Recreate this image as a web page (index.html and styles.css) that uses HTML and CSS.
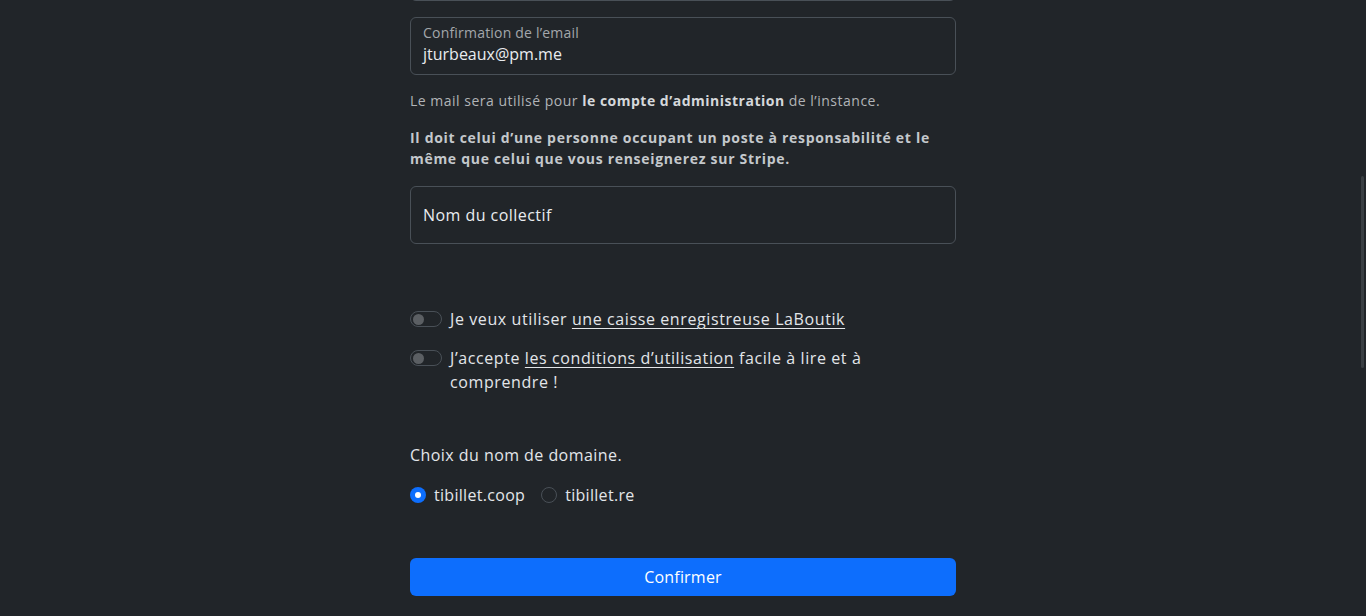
FILE: index.html
```html
<!DOCTYPE html>
<html lang="fr">
<head>
<meta charset="utf-8">
<title>Inscription</title>
<link rel="stylesheet" href="styles.css">
</head>
<body>
<main class="form">
  <div class="field field-prev"></div>

  <div class="field field-floating">
    <span class="float-label">Confirmation de l’email</span>
    <span class="float-value">jturbeaux@pm.me</span>
  </div>

  <p class="help">Le mail sera utilisé pour <strong>le compte d’administration</strong> de l’instance.</p>
  <p class="help help-strong">Il doit celui d’une personne occupant un poste à responsabilité et le même que celui que vous renseignerez sur Stripe.</p>

  <div class="field field-plain">Nom du collectif</div>

  <div class="switches">
    <label class="switch-row">
      <span class="switch"><span class="knob"></span></span>
      <span class="switch-text">Je veux utiliser <a href="#" class="link">une caisse enregistreuse LaBoutik</a></span>
    </label>
    <label class="switch-row">
      <span class="switch"><span class="knob"></span></span>
      <span class="switch-text">J’accepte <a href="#" class="link">les conditions d’utilisation</a> facile à lire et à comprendre !</span>
    </label>
  </div>

  <p class="domain-title">Choix du nom de domaine.</p>
  <div class="radios">
    <label class="radio-item"><span class="radio radio-on"></span>tibillet.coop</label>
    <label class="radio-item"><span class="radio"></span>tibillet.re</label>
  </div>

  <button class="btn-primary" type="button">Confirmer</button>
</main>
<div class="scroll-thumb"></div>
</body>
</html>
```

FILE: styles.css
```css
html, body {
  margin: 0;
  padding: 0;
  background: #212529;
  height: 100%;
  overflow: hidden;
}

body {
  font-family: "Open Sans", "Noto Sans", sans-serif;
  color: #dee2e6;
  font-size: 16px;
  line-height: 24px;
}

.form {
  width: 546px;
  margin: 0 auto;
  display: flex;
  flex-direction: column;
}

.field {
  box-sizing: border-box;
  border: 1px solid #495057;
  border-radius: 6px;
  height: 58px;
}

.field-prev {
  margin-top: -57px;
  margin-bottom: 16px;
}

.field-floating {
  display: flex;
  flex-direction: column;
  padding: 6px 12px 8px;
}

.float-label {
  font-size: 14px;
  line-height: 18px;
  letter-spacing: 0.2px;
  color: #a3a7ab;
}

.float-value {
  font-size: 16px;
  line-height: 24px;
  color: #e9ecef;
}

.help {
  margin: 15px 0 0;
  font-size: 14px;
  line-height: 21px;
  letter-spacing: 0.5px;
  color: #b1b4b7;
}

.help strong {
  color: #d5d8db;
  font-weight: 700;
}

.help-strong {
  margin-top: 16px;
  font-weight: 700;
  letter-spacing: 0.7px;
  color: #c4c8cc;
}

.field-plain {
  margin-top: 17px;
  display: flex;
  align-items: center;
  padding: 0 12px;
  letter-spacing: 0.45px;
  color: #e9ecef;
}

.switches {
  margin-top: 63px;
  display: flex;
  flex-direction: column;
  gap: 15px;
}

.switch-row {
  display: flex;
  align-items: flex-start;
  gap: 8px;
}

.switch {
  flex: none;
  box-sizing: border-box;
  width: 32px;
  height: 16px;
  margin-top: 4px;
  border: 1px solid #495057;
  border-radius: 8px;
  display: flex;
  align-items: center;
  padding-left: 2px;
}

.knob {
  width: 11px;
  height: 11px;
  border-radius: 50%;
  background: #5b5f63;
}

.switch-text {
  color: #e3e6e9;
  letter-spacing: 0.6px;
}

.link {
  color: #e3e6e9;
  text-decoration: underline;
  text-underline-offset: 3px;
  text-decoration-thickness: 1px;
}

.domain-title {
  margin: 49px 0 0;
  letter-spacing: 0.45px;
  color: #e3e6e9;
}

.radios {
  margin-top: 16px;
  display: flex;
  gap: 16px;
}

.radio-item {
  display: flex;
  align-items: center;
  gap: 8px;
  letter-spacing: 0.3px;
  color: #e3e6e9;
}

.radio {
  box-sizing: border-box;
  width: 16px;
  height: 16px;
  border-radius: 50%;
  border: 1px solid #495057;
}

.radio-on {
  border: none;
  background: #0d6efd;
  display: flex;
  align-items: center;
  justify-content: center;
}

.radio-on::after {
  content: "";
  width: 6px;
  height: 6px;
  border-radius: 50%;
  background: #fff;
}

.btn-primary {
  margin-top: 51px;
  height: 38px;
  border: none;
  border-radius: 6px;
  background: #0d6efd;
  color: #fff;
  font-family: inherit;
  font-size: 16px;
  letter-spacing: 0.2px;
  cursor: pointer;
}

.scroll-thumb {
  position: fixed;
  right: 2px;
  top: 176px;
  width: 3px;
  height: 192px;
  border-radius: 2px;
  background: #3a3f43;
}
```
